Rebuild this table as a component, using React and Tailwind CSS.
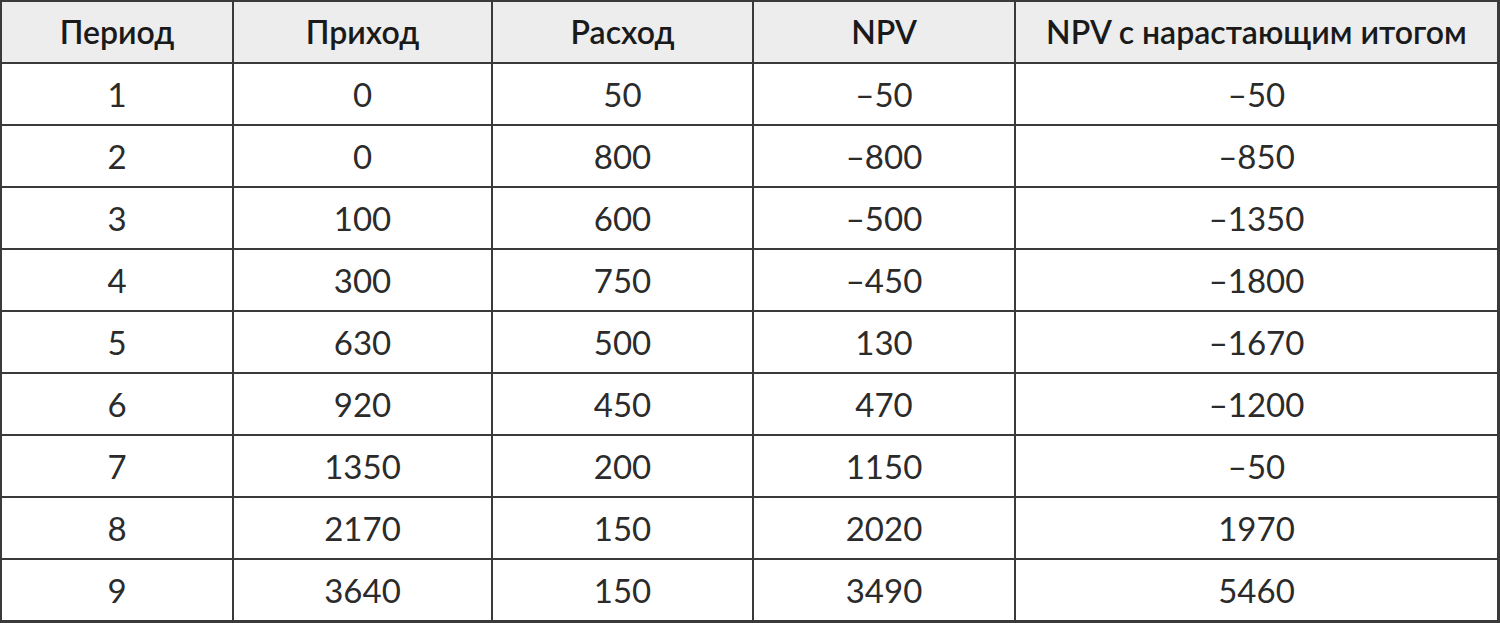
import React from "react";

const header = ["Период", "Приход", "Расход", "NPV", "NPV с нарастающим итогом"];
const rows = [
  ["1", "0", "50", "–50", "–50"],
  ["2", "0", "800", "–800", "–850"],
  ["3", "100", "600", "–500", "–1350"],
  ["4", "300", "750", "–450", "–1800"],
  ["5", "630", "500", "130", "–1670"],
  ["6", "920", "450", "470", "–1200"],
  ["7", "1350", "200", "1150", "–50"],
  ["8", "2170", "150", "2020", "1970"],
  ["9", "3640", "150", "3490", "5460"],
];

export default function App() {
  return (
    <div
      className="w-[1500px] h-[623px] bg-[#3a3a3a] pt-[2px] pl-[2px] pr-[3px] pb-[3px]"
      style={{ fontFamily: "Lato, 'Noto Sans', sans-serif" }}
    >
      <div className="grid grid-cols-[230px_257px_259px_260px_481px] grid-rows-[repeat(10,60px)] gap-[2px]">
        {header.map((h, i) => (
          <div
            key={"h" + i}
            className="bg-[#ededed] flex items-center justify-center text-[32px] font-semibold text-[#1a1a1a]"
          >
            {h}
          </div>
        ))}
        {rows.map((r, ri) =>
          r.map((c, ci) => (
            <div
              key={ri + "-" + ci}
              className="bg-white flex items-center justify-center pt-[2px] text-[33px] font-normal text-[#2b2b2b]"
            >
              {c}
            </div>
          ))
        )}
      </div>
    </div>
  );
}
